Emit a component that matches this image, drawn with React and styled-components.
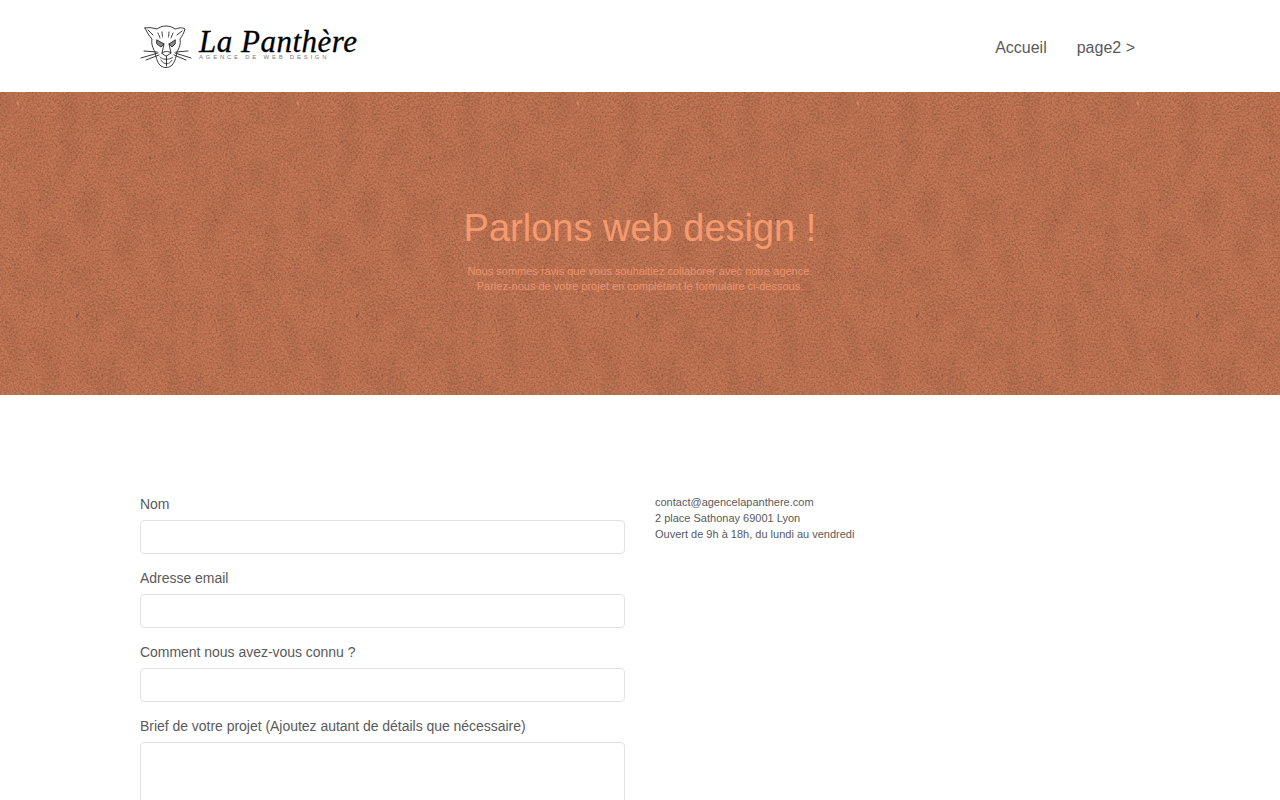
import React from 'react'
import styled, { createGlobalStyle } from 'styled-components'

const grain = `<svg xmlns='http://www.w3.org/2000/svg' width='280' height='343'><filter id='d' x='0' y='0' width='100%' height='100%' color-interpolation-filters='sRGB'><feTurbulence type='fractalNoise' baseFrequency='.55' numOctaves='2' seed='7' stitchTiles='stitch'/><feColorMatrix values='0 0 0 0 .42 0 0 0 0 .24 0 0 0 0 .15 1.1 0 0 0 -.44'/></filter><filter id='l' x='0' y='0' width='100%' height='100%' color-interpolation-filters='sRGB'><feTurbulence type='fractalNoise' baseFrequency='.5' numOctaves='2' seed='21' stitchTiles='stitch'/><feColorMatrix values='0 0 0 0 .92 0 0 0 0 .58 0 0 0 0 .42 .9 0 0 0 -.33'/></filter><rect width='280' height='343' filter='url(#d)'/><rect width='280' height='343' filter='url(#l)'/><g fill='#5a3424' opacity='.7'><ellipse cx='77' cy='224' rx='.7' ry='2.2'/><ellipse cx='150' cy='66' rx='.6' ry='1.4'/><ellipse cx='216' cy='128' rx='.6' ry='1.2'/><ellipse cx='40' cy='108' rx='.6' ry='1.2'/></g><ellipse cx='18' cy='11' rx='.8' ry='2.5' fill='#d98a63'/></svg>`
const blotch = `<svg xmlns='http://www.w3.org/2000/svg' width='280' height='343'><filter id='b' x='0' y='0' width='100%' height='100%' color-interpolation-filters='sRGB'><feTurbulence type='fractalNoise' baseFrequency='.05 .03' numOctaves='3' seed='4' stitchTiles='stitch'/><feColorMatrix values='0 0 0 0 .44 0 0 0 0 .25 0 0 0 0 .16 .36 0 0 0 -.14'/></filter><rect width='280' height='343' filter='url(#b)'/></svg>`

const GlobalStyle = createGlobalStyle`
    html, body {
        margin: 0;
        padding: 0;
        background: #fff;
    }

    body {
        font-family: "Liberation Sans", Arial, sans-serif;
        color: #5a5a5a;
    }
`

const Header = styled.header`
    height: 92px;
    box-sizing: border-box;
    padding: 0 145px 0 140px;
    display: flex;
    align-items: center;
    justify-content: space-between;
`

const Logo = styled.a`
    display: flex;
    align-items: center;
    gap: 5px;
`

const LogoMark = styled.svg`
    display: block;
    margin-top: -3px;
`

const LogoText = styled.div`
    display: flex;
    flex-direction: column;
    margin-top: -4px;
`

const LogoName = styled.span`
    font-family: "Liberation Serif", serif;
    font-style: italic;
    font-size: 31px;
    line-height: 25px;
    letter-spacing: .5px;
    color: #000;
    -webkit-text-stroke: .3px #000;
`

const LogoTagline = styled.span`
    font-size: 6px;
    line-height: 6px;
    letter-spacing: 2.75px;
    white-space: nowrap;
    color: #777;
`

const Nav = styled.nav`
    display: flex;
    gap: 30px;
    margin-top: 4px;
    font-size: 16px;
`

const Hero = styled.section`
    height: 303px;
    box-sizing: border-box;
    padding-top: 111px;
    text-align: center;
    background-color: #bb7151;
    background-image: url("data:image/svg+xml,${encodeURIComponent(grain)}"), url("data:image/svg+xml,${encodeURIComponent(blotch)}");
`

const HeroTitle = styled.h1`
    margin: 0;
    font-size: 38px;
    line-height: 50px;
    font-weight: 400;
    color: #f5996f;
`

const HeroText = styled.p`
    margin: 11px 0 0;
    font-size: 11px;
    line-height: 15px;
    color: #eb9470;
`

const Main = styled.main`
    padding: 99px 140px 40px;
    display: grid;
    grid-template-columns: 485px 1fr;
    column-gap: 30px;
`

const Form = styled.form`
    display: flex;
    flex-direction: column;
    gap: 16px;
    padding-top: 2px;
`

const Field = styled.div`
    display: flex;
    flex-direction: column;
`

const Label = styled.label`
    font-size: 14px;
    line-height: 16px;
    letter-spacing: -.03px;
    margin-bottom: 8px;
`

const Input = styled.input`
    height: 34px;
    box-sizing: border-box;
    border: 1px solid #e2e2e2;
    border-radius: 4px;
    background: #fff;
`

const Textarea = styled.textarea`
    height: 150px;
    box-sizing: border-box;
    border: 1px solid #e2e2e2;
    border-radius: 4px;
    background: #fff;
`

const Contact = styled.address`
    font-style: normal;
    font-size: 11px;
    line-height: 16px;
`

const PantherIcon = () => (
    <LogoMark width="54" height="46" viewBox="2 0 54 46" fill="none" stroke="#222" strokeWidth=".9" strokeLinecap="round" strokeLinejoin="round">
        <path d="M7 6 C11 5 15 6 19 7 C24 3 32 3 37 7 C41 6 44 5 47 7 C46 11 44 14 42 17 C43 22 41 26 39 30 C38 36 36 42 33 44 C30 46 26 46 23 44 C20 42 18 36 17 30 C15 26 13 22 14 17 C11 14 9 10 7 6 Z" />
        <path d="M10 8 L15 13 M44 9 L39 13" />
        <path d="M19 18 L26 22 L23 25 L19 22 Z M37 18 L31 22 L34 25 L37 22 Z" fill="#888" />
        <path d="M20 11 L22 16 M24 10 L24.5 15 M35 11 L33 16 M31 10 L30.5 15" strokeDasharray="1.5 1" />
        <path d="M26 22 L24 31 M31 22 L33 31 M24 31 C26 29 31 29 33 31 L28.5 34 Z" />
        <path d="M22 35 C25 38 32 38 35 35 M23 38 C26 43 31 43 34 38" strokeDasharray="1.4 1" />
        <path d="M28.5 34 L28.5 44" />
        <path d="M3 36 L20 31 M6 29 L19 30 M8 38 L21 33 M53 36 L37 31 M50 29 L38 30 M48 38 L36 33" />
    </LogoMark>
)

const App = () => {
    return (
        <>
            <GlobalStyle />
            <Header>
                <Logo>
                    <PantherIcon />
                    <LogoText>
                        <LogoName>La Panthère</LogoName>
                        <LogoTagline>AGENCE DE WEB DESIGN</LogoTagline>
                    </LogoText>
                </Logo>
                <Nav>
                    <span>Accueil</span>
                    <span>page2 &gt;</span>
                </Nav>
            </Header>
            <Hero>
                <HeroTitle>Parlons web design !</HeroTitle>
                <HeroText>
                    Nous sommes ravis que vous souhaitiez collaborer avec notre agence.
                    <br />
                    Parlez-nous de votre projet en complétant le formulaire ci-dessous.
                </HeroText>
            </Hero>
            <Main>
                <Form>
                    <Field>
                        <Label>Nom</Label>
                        <Input type="text" />
                    </Field>
                    <Field>
                        <Label>Adresse email</Label>
                        <Input type="email" />
                    </Field>
                    <Field>
                        <Label>Comment nous avez-vous connu ?</Label>
                        <Input type="text" />
                    </Field>
                    <Field>
                        <Label>Brief de votre projet (Ajoutez autant de détails que nécessaire)</Label>
                        <Textarea />
                    </Field>
                </Form>
                <Contact>
                    contact@agencelapanthere.com
                    <br />
                    2 place Sathonay 69001 Lyon
                    <br />
                    Ouvert de 9h à 18h, du lundi au vendredi
                </Contact>
            </Main>
        </>
    )
}

export default App
